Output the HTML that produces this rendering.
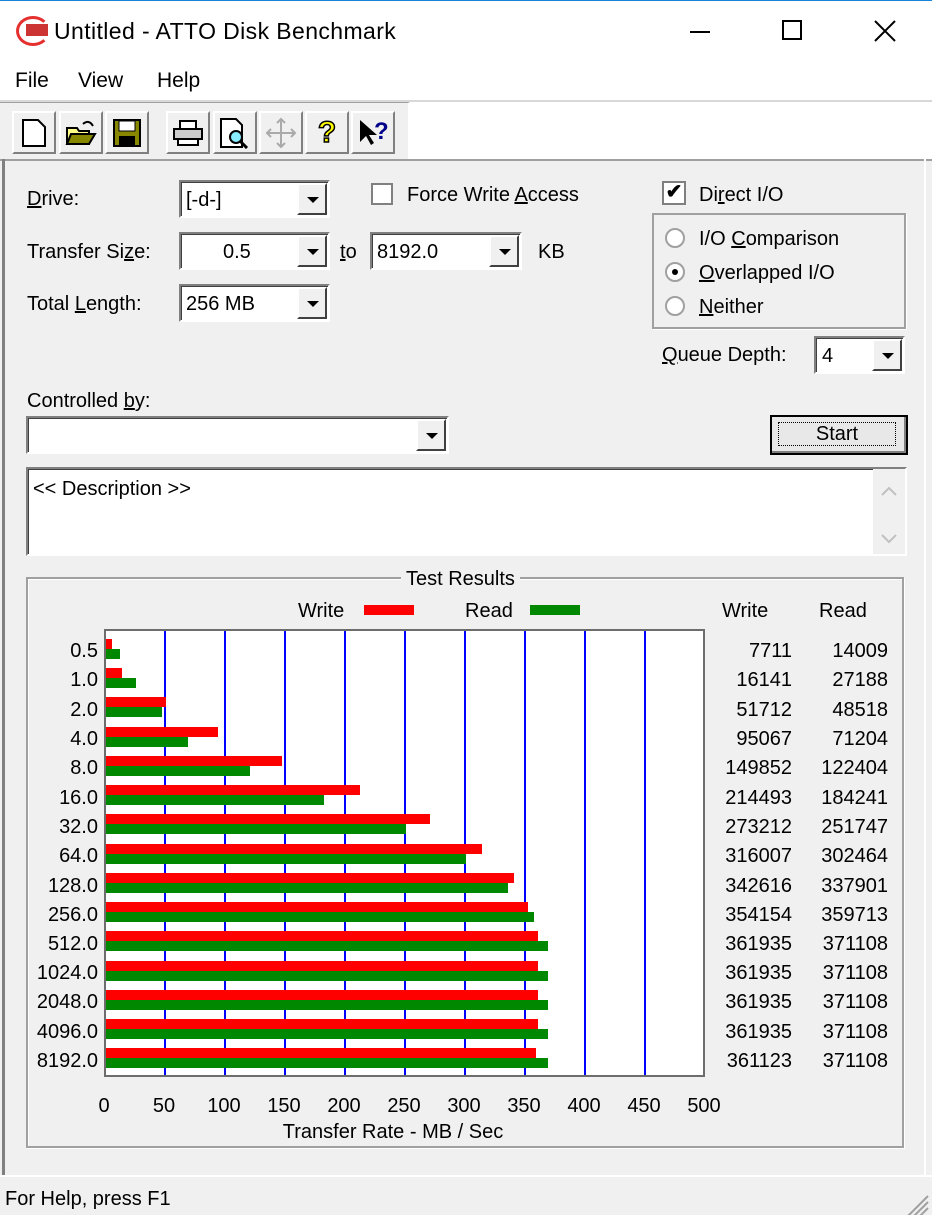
<!DOCTYPE html>
<html><head><meta charset="utf-8"><style>
*{box-sizing:border-box;margin:0;padding:0}
body{width:932px;height:1215px;background:#f0f0f0;font-family:"Liberation Sans",sans-serif;font-size:20px;color:#000;position:relative;overflow:hidden}
.a{position:absolute}
.t{position:absolute;white-space:nowrap;line-height:24px}
.sunk{position:absolute;background:#fff;border-top:2px solid #808080;border-left:2px solid #808080;border-right:2px solid #fff;border-bottom:2px solid #fff;box-shadow:inset 1px 1px 0 #404040}
.dd{position:absolute;width:30px;top:1px;bottom:1px;right:1px;background:#f0f0f0;border-top:2px solid #fff;border-left:2px solid #fff;border-right:2px solid #404040;border-bottom:2px solid #404040}
.dd:after{content:"";position:absolute;left:8px;top:12px;border-left:6px solid transparent;border-right:6px solid transparent;border-top:6px solid #000}
.btn{position:absolute;top:111px;width:44px;height:43px;background:#f0f0f0;border-top:2px solid #fff;border-left:2px solid #fff;border-right:2px solid #808080;border-bottom:2px solid #808080;display:flex;align-items:center;justify-content:center}
.rad{position:absolute;width:20px;height:20px;border-radius:50%;background:#fff;border:2px solid #a0a0a0}
u{text-decoration:underline}
</style></head><body>
<div class="a" style="left:0;top:0;width:932px;height:62px;background:#fff;border-top:1px solid #1883d7"></div>
<div class="a" style="left:16px;top:16px;width:34px;height:30px;border:3px solid #e53030;border-radius:50%;border-right-color:transparent"></div>
<div class="a" style="left:26px;top:24px;width:22px;height:12px;background:#c33"></div>
<div class="t" style="left:54px;top:19px;font-size:23px;letter-spacing:0.4px">Untitled - ATTO Disk Benchmark</div>
<div class="a" style="left:690px;top:31px;width:20px;height:2px;background:#000"></div>
<div class="a" style="left:782px;top:20px;width:20px;height:20px;border:2px solid #000"></div>
<svg class="a" style="left:874px;top:20px" width="22" height="22"><path d="M1 1l20 20M21 1L1 21" stroke="#000" stroke-width="2"/></svg>
<div class="a" style="left:0;top:62px;width:932px;height:38px;background:#fff"></div>
<div class="t" style="left:15px;top:69px;font-size:21px">File</div>
<div class="t" style="left:78px;top:69px;font-size:21px">View</div>
<div class="t" style="left:157px;top:69px;font-size:21px">Help</div>
<div class="a" style="left:0;top:100px;width:932px;height:2px;background:#d8d8d8"></div>
<div class="a" style="left:0;top:102px;width:410px;height:57px;background:#f0f0f0;border-right:2px solid #fff;border-top:1px solid #a0a0a0"></div>
<div class="a" style="left:410px;top:102px;width:522px;height:57px;background:#fff"></div>
<div class="btn" style="left:12px"><svg width="26" height="30"><path d="M2 2h15l7 7v19H2z" fill="#fff" stroke="#000" stroke-width="2"/></svg></div>
<div class="btn" style="left:59px"><svg width="32" height="30"><path d="M2 10h10l2 3h10v13H2z" fill="#ff8" stroke="#000" stroke-width="2"/><path d="M6 16h24l-6 10H2z" fill="#880" stroke="#000" stroke-width="2"/><path d="M18 6q6-5 10 2" fill="none" stroke="#000" stroke-width="2"/></svg></div>
<div class="btn" style="left:105px"><svg width="28" height="28"><rect x="1" y="1" width="26" height="26" fill="#880" stroke="#000" stroke-width="2"/><rect x="6" y="2" width="16" height="10" fill="#fff" stroke="#000"/><rect x="6" y="17" width="16" height="9" fill="#000"/></svg></div>
<div class="btn" style="left:166px"><svg width="32" height="28"><rect x="8" y="2" width="16" height="8" fill="#fff" stroke="#000" stroke-width="2"/><rect x="2" y="10" width="28" height="10" fill="#ccc" stroke="#000" stroke-width="2"/><rect x="6" y="20" width="20" height="6" fill="#fff" stroke="#000" stroke-width="2"/></svg></div>
<div class="btn" style="left:213px"><svg width="32" height="32"><path d="M2 2h15l6 6v22H2z" fill="#fff" stroke="#000" stroke-width="2"/><circle cx="17" cy="20" r="6" fill="#8ef" stroke="#000" stroke-width="2"/><path d="M21 24l7 7" stroke="#000" stroke-width="3"/></svg></div>
<div class="btn" style="left:259px"><svg width="32" height="32"><path d="M16 2v28M2 16h28M12 6l4-4 4 4M12 26l4 4 4-4M6 12l-4 4 4 4M26 12l4 4-4 4" fill="none" stroke="#aaa" stroke-width="2"/></svg></div>
<div class="btn" style="left:305px"><span style="font:bold 30px 'Liberation Sans';color:#ff0;-webkit-text-stroke:1.5px #000">?</span></div>
<div class="btn" style="left:351px"><svg width="32" height="32"><path d="M3 3v22l6-6 5 9 3-2-5-8h8z" fill="#000"/><text x="17" y="22" font-family="Liberation Sans" font-weight="bold" font-size="24" fill="#008">?</text></svg></div>
<div class="a" style="left:0;top:159px;width:932px;height:2px;background:#a0a0a0"></div>
<div class="a" style="left:2px;top:159px;width:3px;height:1017px;background:#808080"></div>
<div class="a" style="left:924px;top:159px;width:2px;height:1017px;background:#fff"></div>
<div class="t" style="left:27px;top:187px"><u>D</u>rive:</div>
<div class="sunk" style="left:179px;top:180px;width:151px;height:38px"><div class="t" style="left:5px;top:6px">[-d-]</div><div class="dd"></div></div>
<div class="a" style="left:371px;top:183px;width:22px;height:22px;background:#fff;border:2px solid #808080"></div>
<div class="t" style="left:407px;top:183px">Force Write <u>A</u>ccess</div>
<div class="t" style="left:27px;top:240px">Transfer Si<u>z</u>e:</div>
<div class="sunk" style="left:179px;top:232px;width:151px;height:38px"><div class="t" style="left:42px;top:6px">0.5</div><div class="dd"></div></div>
<div class="t" style="left:340px;top:240px"><u>t</u>o</div>
<div class="sunk" style="left:370px;top:232px;width:152px;height:38px"><div class="t" style="left:5px;top:6px">8192.0</div><div class="dd"></div></div>
<div class="t" style="left:538px;top:240px">KB</div>
<div class="t" style="left:27px;top:292px">Total <u>L</u>ength:</div>
<div class="sunk" style="left:179px;top:284px;width:151px;height:38px"><div class="t" style="left:5px;top:6px">256 MB</div><div class="dd"></div></div>
<div class="a" style="left:662px;top:181px;width:24px;height:24px;background:#fff;border:2px solid #808080;font-size:20px;line-height:18px;text-align:center;font-weight:bold">✔</div>
<div class="t" style="left:699px;top:183px">Di<u>r</u>ect I/O</div>
<div class="a" style="left:652px;top:213px;width:254px;height:116px;border:2px solid #a0a0a0;box-shadow:1px 1px 0 #fff"></div>
<div class="rad" style="left:665px;top:228px"></div>
<div class="t" style="left:699px;top:227px">I/O <u>C</u>omparison</div>
<div class="rad" style="left:665px;top:262px"><div class="a" style="left:5px;top:5px;width:6px;height:6px;border-radius:50%;background:#000"></div></div>
<div class="t" style="left:699px;top:261px"><u>O</u>verlapped I/O</div>
<div class="rad" style="left:665px;top:296px"></div>
<div class="t" style="left:699px;top:295px"><u>N</u>either</div>
<div class="t" style="left:662px;top:343px"><u>Q</u>ueue Depth:</div>
<div class="sunk" style="left:814px;top:336px;width:91px;height:38px"><div class="t" style="left:6px;top:6px">4</div><div class="dd"></div></div>
<div class="t" style="left:27px;top:389px">Controlled <u>b</u>y:</div>
<div class="sunk" style="left:26px;top:416px;width:423px;height:38px"><div class="dd"></div></div>
<div class="a" style="left:770px;top:415px;width:138px;height:40px;border:2px solid #000;background:#e8e8e8;box-shadow:inset -2px -2px 0 #808080"><div class="a" style="left:6px;top:5px;width:118px;height:24px;border:1px dotted #000;text-align:center;line-height:22px">Start</div></div>
<div class="sunk" style="left:26px;top:467px;width:881px;height:89px"><div class="t" style="left:5px;top:8px">&lt;&lt; Description &gt;&gt;</div>
<div class="a" style="right:0;top:0;width:32px;height:85px;background:#f0f0f0"><svg width="32" height="85"><path d="M9 26l7-7 7 7M9 66l7 7 7-7" fill="none" stroke="#c0c0c0" stroke-width="2"/></svg></div></div>
<div class="a" style="left:26px;top:577px;width:878px;height:571px;border:2px solid #a0a0a0;box-shadow:inset 1px 1px 0 #fff,1px 1px 0 #fff"></div>
<div class="t" style="left:401px;top:567px;background:#f0f0f0;padding:0 5px">Test Results</div>
<div class="t" style="left:298px;top:599px">Write</div>
<div class="a" style="left:364px;top:605px;width:50px;height:10px;background:#f00"></div>
<div class="t" style="left:465px;top:599px">Read</div>
<div class="a" style="left:530px;top:605px;width:50px;height:10px;background:#080"></div>
<div class="t" style="left:722px;top:599px">Write</div>
<div class="t" style="left:819px;top:599px">Read</div>
<div class="a" style="left:104px;top:629px;width:601px;height:448px;background:#fff;border:2px solid #6d6d6d"></div>
<svg class="a" style="left:0;top:0" width="932" height="1215">
<g fill="#00f"><rect x="164" y="631" width="2" height="444"/><rect x="224" y="631" width="2" height="444"/><rect x="284" y="631" width="2" height="444"/><rect x="344" y="631" width="2" height="444"/><rect x="404" y="631" width="2" height="444"/><rect x="464" y="631" width="2" height="444"/><rect x="524" y="631" width="2" height="444"/><rect x="584" y="631" width="2" height="444"/><rect x="644" y="631" width="2" height="444"/></g>
<g fill="#f00">
<rect x="106" y="639" width="6" height="10"/><rect x="106" y="668" width="16" height="10"/><rect x="106" y="697" width="60" height="10"/><rect x="106" y="727" width="112" height="10"/><rect x="106" y="756" width="176" height="10"/><rect x="106" y="785" width="254" height="10"/><rect x="106" y="814" width="324" height="10"/><rect x="106" y="844" width="376" height="10"/><rect x="106" y="873" width="408" height="10"/><rect x="106" y="902" width="422" height="10"/><rect x="106" y="931" width="432" height="10"/><rect x="106" y="961" width="432" height="10"/><rect x="106" y="990" width="432" height="10"/><rect x="106" y="1019" width="432" height="10"/><rect x="106" y="1048" width="430" height="10"/></g>
<g fill="#080">
<rect x="106" y="649" width="14" height="10"/><rect x="106" y="678" width="30" height="10"/><rect x="106" y="707" width="56" height="10"/><rect x="106" y="737" width="82" height="10"/><rect x="106" y="766" width="144" height="10"/><rect x="106" y="795" width="218" height="10"/><rect x="106" y="824" width="300" height="10"/><rect x="106" y="854" width="360" height="10"/><rect x="106" y="883" width="402" height="10"/><rect x="106" y="912" width="428" height="10"/><rect x="106" y="941" width="442" height="10"/><rect x="106" y="971" width="442" height="10"/><rect x="106" y="1000" width="442" height="10"/><rect x="106" y="1029" width="442" height="10"/><rect x="106" y="1058" width="442" height="10"/></g>
<g font-family="Liberation Sans" font-size="20" text-anchor="end">
<text x="98" y="657">0.5</text><text x="98" y="686">1.0</text><text x="98" y="716">2.0</text><text x="98" y="745">4.0</text><text x="98" y="774">8.0</text><text x="98" y="804">16.0</text><text x="98" y="833">32.0</text><text x="98" y="862">64.0</text><text x="98" y="892">128.0</text><text x="98" y="921">256.0</text><text x="98" y="950">512.0</text><text x="98" y="979">1024.0</text><text x="98" y="1008">2048.0</text><text x="98" y="1038">4096.0</text><text x="98" y="1067">8192.0</text>
<text x="792" y="657">7711</text><text x="792" y="686">16141</text><text x="792" y="716">51712</text><text x="792" y="745">95067</text><text x="792" y="774">149852</text><text x="792" y="804">214493</text><text x="792" y="833">273212</text><text x="792" y="862">316007</text><text x="792" y="892">342616</text><text x="792" y="921">354154</text><text x="792" y="950">361935</text><text x="792" y="979">361935</text><text x="792" y="1008">361935</text><text x="792" y="1038">361935</text><text x="792" y="1067">361123</text>
<text x="888" y="657">14009</text><text x="888" y="686">27188</text><text x="888" y="716">48518</text><text x="888" y="745">71204</text><text x="888" y="774">122404</text><text x="888" y="804">184241</text><text x="888" y="833">251747</text><text x="888" y="862">302464</text><text x="888" y="892">337901</text><text x="888" y="921">359713</text><text x="888" y="950">371108</text><text x="888" y="979">371108</text><text x="888" y="1008">371108</text><text x="888" y="1038">371108</text><text x="888" y="1067">371108</text>
</g>
<g font-family="Liberation Sans" font-size="20" text-anchor="middle">
<text x="104" y="1112">0</text><text x="164" y="1112">50</text><text x="224" y="1112">100</text><text x="284" y="1112">150</text><text x="344" y="1112">200</text><text x="404" y="1112">250</text><text x="464" y="1112">300</text><text x="524" y="1112">350</text><text x="584" y="1112">400</text><text x="644" y="1112">450</text><text x="704" y="1112">500</text>
<text x="393" y="1138">Transfer Rate - MB / Sec</text></g>
<g stroke="#a0a0a0" stroke-width="2"><path d="M928 1196l-20 20M928 1202l-14 14M928 1208l-8 8"/></g>
</svg>
<div class="a" style="left:0;top:1175px;width:932px;height:2px;background:#fff"></div>
<div class="t" style="left:5px;top:1187px">For Help, press F1</div>
</body></html>
